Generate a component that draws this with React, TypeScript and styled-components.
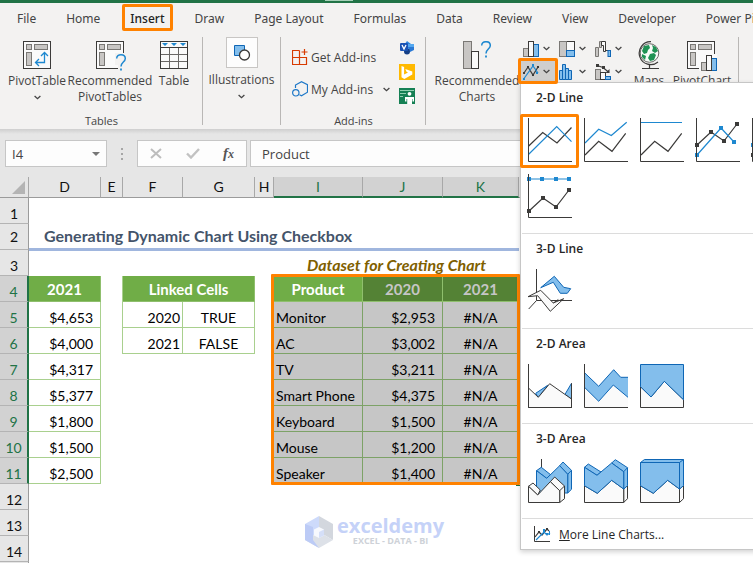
import React from "react";
import styled, { createGlobalStyle, css } from "styled-components";

const UI = `"Open Sans", "Noto Sans", sans-serif`;
const TAB_FONT = `"Noto Sans", "Open Sans", sans-serif`;
const SHEET = `Lato, "Liberation Sans", sans-serif`;
const ORANGE = "#ff8200";
const INK = "#3b3a39";
const BLUE = "#1e88d0";
const EDGE = "#0f66b5";
const FILL = "#83beec";
const PALE = "#fafafa";
const GREY = "#c8c6c4";

const GlobalStyle = createGlobalStyle`
  * { box-sizing: border-box; }
  html, body { margin: 0; height: 100%; overflow: hidden; }
  body { font-family: ${UI}; font-size: 12px; color: #444; background: #fff; }
  button, input { font: inherit; color: inherit; margin: 0; padding: 0; border: 0; background: none; }
  svg { display: block; flex: none; }
`;

const Page = styled.div`
  height: 100vh;
  overflow: hidden;
  display: flex;
  flex-direction: column;
`;

const TitleStrip = styled.div`
  flex: none;
  height: 3px;
  background: #217346;
  padding-left: 325px;
`;
const TitleMark = styled.div`
  width: 28px;
  height: 1px;
  background: #a5cfb7;
`;

const TabBar = styled.nav`
  flex: none;
  display: flex;
  gap: 30px;
  height: 34px;
  padding: 0 17px 4px;
  background: #f3f2f1;
  overflow: hidden;
`;
const Tab = styled.button<{ $active?: boolean }>`
  position: relative;
  flex: none;
  white-space: nowrap;
  font-family: ${TAB_FONT};
  font-size: 12px;
  ${(p) =>
    p.$active &&
    css`
      font-weight: 500;
      color: #222;
      &::after {
        content: "";
        position: absolute;
        inset: 1px -8px 2px -8px;
        border: 3px solid ${ORANGE};
        border-radius: 2px;
      }
    `}
`;

const Ribbon = styled.div`
  flex: none;
  display: flex;
  height: 92px;
  background: #f3f2f1;
`;
const Group = styled.section<{ $width: number }>`
  flex: none;
  position: relative;
  display: flex;
  flex-direction: column;
  justify-content: space-between;
  width: ${(p) => p.$width}px;
  &::after {
    content: "";
    position: absolute;
    right: 0;
    top: 0;
    bottom: 4px;
    width: 1px;
    background: #b9b7b5;
  }
`;
const GroupBody = styled.div<{ $left?: number }>`
  display: flex;
  align-items: flex-start;
  padding-left: ${(p) => p.$left ?? 0}px;
`;
const GroupName = styled.div`
  text-align: center;
  font-size: 11px;
  line-height: 16px;
`;
const BigButton = styled.button<{ $width: number; $top?: number }>`
  flex: none;
  display: flex;
  flex-direction: column;
  align-items: center;
  gap: 4px;
  width: ${(p) => p.$width}px;
  padding-top: ${(p) => p.$top ?? 4}px;
  line-height: 16px;
  white-space: nowrap;
`;
const BigLabel = styled.span`
  display: flex;
  flex-direction: column;
  align-items: center;
`;
const ChevronLine = styled.span`
  display: flex;
  align-items: center;
  height: 16px;
`;
const IconTile = styled.span`
  display: flex;
  align-items: center;
  justify-content: center;
  width: 32px;
  height: 31px;
  background: #fdfdfd;
  border: 1px solid #c8c6c4;
`;
const AddInList = styled.div`
  display: flex;
  flex-direction: column;
  gap: 8px;
  width: 98px;
  padding-top: 8px;
`;
const AddInButton = styled.button`
  display: flex;
  align-items: center;
  gap: 3px;
  height: 24px;
  white-space: nowrap;
  svg:last-child:not(:first-child) { margin-left: auto; }
`;
const AppColumn = styled.div`
  display: flex;
  flex-direction: column;
  gap: 8px;
  margin-left: 9px;
  padding-top: 3px;
`;
const AppButton = styled.button`
  display: block;
  width: 16px;
  height: 16px;
`;

const ChartGrid = styled.div`
  display: grid;
  grid-template-columns: repeat(3, 36px);
  grid-auto-rows: 23px;
  width: 108px;
`;
const SplitWrap = styled.div`
  position: relative;
`;
const Split = styled.button<{ $open?: boolean }>`
  display: flex;
  align-items: center;
  gap: 4px;
  width: 36px;
  height: 23px;
  padding-left: 3px;
  background: ${(p) => (p.$open ? "#cfcecd" : "transparent")};
`;
const SplitFrame = styled.span`
  position: absolute;
  z-index: 5;
  inset: -2px -2px -1px -2px;
  border: 3px solid ${ORANGE};
  border-radius: 2px;
  pointer-events: none;
`;

const Menu = styled.div`
  position: absolute;
  z-index: 4;
  left: 0;
  top: 22px;
  width: 296px;
  color: #262626;
  background: #fff;
  border: 1px solid #c6c6c6;
  box-shadow: 0 2px 5px rgba(0, 0, 0, 0.18);
`;
const MenuSection = styled.section`
  margin-left: 1px;
  padding-bottom: 9px;
  border-bottom: 1px solid #dcdcdc;
`;
const MenuTitle = styled.h2`
  margin: 0;
  padding-left: 14px;
  font-size: 12px;
  font-weight: 600;
  line-height: 29px;
`;
const Gallery = styled.div`
  display: grid;
  grid-template-columns: repeat(5, 56px);
`;
const GalleryItem = styled.button<{ $marked?: boolean }>`
  position: relative;
  width: 56px;
  height: 56px;
  padding: 6px;
  ${(p) =>
    p.$marked &&
    css`
      &::after {
        content: "";
        position: absolute;
        inset: 2px -1px 0 -2px;
        border: 3px solid ${ORANGE};
        border-radius: 2px;
      }
    `}
`;
const MoreButton = styled.button`
  display: flex;
  align-items: center;
  gap: 8px;
  width: 100%;
  height: 30px;
  padding-left: 13px;
`;

const FormulaRow = styled.div`
  flex: none;
  display: flex;
  height: 48px;
  padding: 11px 0 10px 5px;
  background: linear-gradient(#cfcfcf, #e6e6e6 5px);
`;
const NameBox = styled.div`
  display: flex;
  align-items: center;
  width: 102px;
  background: #fdfdfd;
  border: 1px solid #c6c6c6;
  input {
    flex: 1;
    min-width: 0;
    padding-left: 6px;
    font-size: 13px;
  }
  button { padding: 8px 6px; }
`;
const Dots = styled.div`
  display: flex;
  flex-direction: column;
  align-items: center;
  justify-content: center;
  gap: 3px;
  width: 30px;
  i { width: 2px; height: 2px; background: #a6a6a6; }
`;
const FxBox = styled.div`
  display: flex;
  align-items: center;
  justify-content: space-between;
  width: 110px;
  margin-right: 3px;
  padding: 0 12px;
  background: #fdfdfd;
  border: 1px solid #c6c6c6;
`;
const FxButton = styled.button`
  && { font: italic bold 15px/16px "Liberation Serif", serif; }
  color: #555;
  small { font-size: 12px; }
`;
const FormulaInput = styled.input`
  flex: 1;
  min-width: 0;
  && {
    padding-left: 11px;
    font-size: 13px;
    background: #fdfdfd;
    border: 1px solid #c6c6c6;
  }
`;

const SheetArea = styled.main`
  flex: 1;
  min-height: 0;
  position: relative;
  overflow: hidden;
  background: linear-gradient(to right, #e6e6e6 28px, #9b9b9b 28px, #9b9b9b 29px, #fff 29px);
`;
const Sheet = styled.table`
  width: 100%;
  table-layout: fixed;
  border-spacing: 0;
  font-family: ${SHEET};
  font-size: 14px;
  line-height: 18px;
  color: #000;
  th, td { padding: 0; white-space: nowrap; }
`;
const ColHead = styled.th<{ $sel?: boolean }>`
  height: 21px;
  font-weight: 400;
  font-size: 14px;
  color: ${(p) => (p.$sel ? "#217346" : "#111")};
  background: ${(p) => (p.$sel ? "#d2d2d2" : "#e6e6e6")};
  border-right: 1px solid #a8a8a8;
  border-bottom: ${(p) => (p.$sel ? "2px solid #217346" : "1px solid #9b9b9b")};
`;
const Corner = styled(ColHead)`
  svg { margin: 0 3px 0 auto; }
`;
const RowHead = styled.th<{ $sel?: boolean; $mid?: boolean }>`
  height: 26px;
  font-weight: 400;
  font-size: 14px;
  vertical-align: ${(p) => (p.$mid ? "middle" : "bottom")};
  color: ${(p) => (p.$sel ? "#217346" : "#111")};
  background: ${(p) => (p.$sel ? "#d2d2d2" : "#e6e6e6")};
  border-right: ${(p) => (p.$sel ? "2px solid #217346" : "1px solid #9b9b9b")};
  border-bottom: 1px solid #b4b4b4;
`;
const Cell = styled.td<{
  $align?: "left" | "center" | "right";
  $kind?: "grid" | "sel" | "head" | "active" | "selHead";
  $pad?: number;
}>`
  position: relative;
  height: 26px;
  vertical-align: bottom;
  text-align: ${(p) => p.$align ?? "left"};
  && { padding: 0 ${(p) => p.$pad ?? 2}px; }
  ${(p) =>
    p.$kind === "grid" &&
    css`
      border-right: 1px solid #a9d08e;
      border-bottom: 1px solid #a9d08e;
    `}
  ${(p) =>
    p.$kind === "sel" &&
    css`
      background: #c6c6c6;
      border-right: 1px solid #7da267;
      border-bottom: 1px solid #7da267;
    `}
  ${(p) =>
    (p.$kind === "head" || p.$kind === "active" || p.$kind === "selHead") &&
    css`
      vertical-align: middle;
      font-size: 15px;
      font-weight: 700;
      color: ${p.$kind === "selHead" ? "#c6c6c6" : "#fff"};
      background: ${p.$kind === "selHead" ? "#548235" : "#70ad47"};
      border-right: 1px solid #8fbf6d;
      border-bottom: 1px solid #8fbf6d;
    `}
`;
const LeftEdge = styled.td<{ $on?: boolean }>`
  border-right: 1px solid ${(p) => (p.$on ? "#a9d08e" : "transparent")};
`;
const TitleCell = styled.td`
  vertical-align: middle;
  font-size: 16px;
  font-weight: 700;
  color: #44546a;
  border-bottom: 2px solid #a0b6de;
  && { padding-left: 15px; }
`;
const CaptionCell = styled.td`
  vertical-align: bottom;
  text-align: center;
  font-size: 16px;
  font-weight: 700;
  font-style: italic;
  color: #7f6000;
  border-top: 1px solid #a0b6de;
  && { padding-bottom: 2px; }
`;
const UnderTitle = styled.td`
  border-top: 1px solid #a0b6de;
`;
const SelectionFrame = styled.span`
  position: absolute;
  z-index: 1;
  left: -3px;
  top: -2px;
  width: 249px;
  height: 211px;
  border: 3px solid ${ORANGE};
  border-radius: 1px;
  pointer-events: none;
  &::after {
    content: "";
    position: absolute;
    right: -3px;
    bottom: -4px;
    width: 4px;
    height: 1px;
    background: #217346;
  }
`;

const Watermark = styled.div`
  position: absolute;
  left: 305px;
  top: 339px;
  display: flex;
  gap: 4px;
  color: #c5d2f8;
`;
const WatermarkText = styled.div`
  display: flex;
  flex-direction: column;
  align-items: center;
  font-weight: 700;
  font-size: 20px;
  line-height: 20px;
  small {
    font-size: 9px;
    line-height: 10px;
    color: #ced2d8;
  }
`;

const Chevron = () => (
  <svg width="7" height="5" viewBox="0 0 7 5" fill="none" stroke="#444" strokeWidth="1.3">
    <path d="M.6 1 3.5 3.7 6.4 1" />
  </svg>
);

const PivotFrame = () => (
  <>
    <rect x=".5" y=".5" width="27" height="27" fill={PALE} stroke={INK} />
    <g fill={GREY} stroke="#7a7875">
      <rect x="3.5" y="3.5" width="5" height="5" />
      <rect x="11.5" y="3.5" width="13" height="5" />
      <rect x="3.5" y="11.5" width="5" height="13" />
    </g>
  </>
);
const Question = ({ x, y }: { x: number; y: number }) => (
  <g transform={`translate(${x} ${y})`} fill="none" stroke={BLUE} strokeWidth="1.5">
    <path d="M.7 4.5C.7 2 2.6.7 5 .7s4.3 1.5 4.3 3.8C9.3 8 5 8.2 5 12.5" />
    <path d="M5 14.5v2" strokeWidth="1.8" />
  </g>
);
const PivotTableIcon = () => (
  <svg width="28" height="28" viewBox="0 0 28 28">
    <PivotFrame />
    <g fill="none" stroke={BLUE} strokeWidth="1.3">
      <path d="M21.5 12v9.5H13M18 15l3.5-3.5L25 15M16 18l-3.5 3.5L16 25" />
    </g>
  </svg>
);
const RecommendedPivotIcon = () => (
  <svg width="28" height="28" viewBox="0 0 28 28" overflow="visible">
    <PivotFrame />
    <path d="M19 12h12v18h-9v-6h-3z" fill="#f3f2f1" />
    <Question x={20} y={13} />
  </svg>
);
const TableIcon = () => (
  <svg width="28" height="28" viewBox="0 0 28 28">
    <rect x=".5" y=".5" width="27" height="27" fill={PALE} stroke={INK} />
    <path d="M1 6.5h26" stroke={INK} />
    <path d="M9.5 7v20M18.5 7v20M1 13.5h26M1 20.5h26" stroke="#6a6866" />
    <path d="M2 2h6L5 5zM11 2h6l-3 3zM20 2h6l-3 3z" fill={BLUE} />
  </svg>
);
const ShapesIcon = () => (
  <svg width="18" height="18" viewBox="0 0 18 18">
    <path d="M1.5 1.5h10v10h-10z" fill={FILL} stroke={EDGE} />
    <circle cx="11.5" cy="11" r="5" fill="#fff" stroke={INK} strokeWidth="1.3" />
  </svg>
);
const GetAddInsIcon = () => (
  <svg width="16" height="16" viewBox="0 0 16 16" fill="none" stroke="#d83b01" strokeWidth="1.2">
    <path d="M7.5 1.5h-7v14h14v-7H.5M7.5 1.5v14M12.5 0v6M9.5 3h6" />
  </svg>
);
const MyAddInsIcon = () => (
  <svg width="16" height="16" viewBox="0 0 16 16" fill="none" stroke="#1e78c8" strokeWidth="1.2">
    <path d="M3.5 7V4L9.5.7l6 3v7.5l-6 3.5-2-1" />
    <circle cx="3.8" cy="11.8" r="3.2" />
  </svg>
);
const VisioIcon = () => (
  <svg width="16" height="16" viewBox="0 0 16 16">
    <path d="M8 1l4 3-4 4-3-3z" fill="#2f86e0" />
    <path d="M9 4h6v6H9z" fill="#54a8f0" />
    <path d="M9 7h6v3l-4 2z" fill="#2a78d4" />
    <circle cx="8" cy="11.5" r="3" fill="#143f86" />
    <rect x="1" y="3" width="8" height="8" rx="1" fill="#1a53b4" />
    <path d="M3 5l2 4 2-4" fill="none" stroke="#fff" strokeWidth="1.3" />
  </svg>
);
const BingIcon = () => (
  <svg width="16" height="16" viewBox="0 0 16 16">
    <path d="M0 0h16v16H0z" fill="#ffb900" />
    <path d="M2.5 2l2.6 1v7.5L9 8.4 7.5 7.7 6.3 5l7 2.5v3L5.3 15l-2.8-1.8z" fill="#fff" />
  </svg>
);
const PeopleGraphIcon = () => (
  <svg width="16" height="16" viewBox="0 0 16 16">
    <path d="M0 0h16v16H0z" fill="#158054" />
    <path d="M1 2.5h14M1 5.5h6M1 8.5h3" stroke="#8fd0b0" />
    <circle cx="10.5" cy="5.8" r="1.9" fill="#fff" />
    <path d="M6 9h9v4.5h-1.5V11H13v5H8.2v-5h-.7v2.5H6z" fill="#fff" />
  </svg>
);
const RecommendedChartsIcon = () => (
  <svg width="28" height="28" viewBox="0 0 28 28">
    <rect x=".5" y=".5" width="8" height="27" fill={GREY} stroke="#7a7875" />
    <rect x="8.5" y="10.5" width="7" height="17" fill={PALE} stroke={INK} />
    <Question x={18} y={0} />
  </svg>
);
const ColumnIcon = () => (
  <svg width="16" height="16" viewBox="0 0 16 16">
    <rect x=".5" y="7.5" width="5" height="8" fill={GREY} stroke="#7a7875" />
    <rect x="10.5" y="3.5" width="5" height="12" fill={FILL} stroke={EDGE} />
    <rect x="5.5" y=".5" width="5" height="15" fill={PALE} stroke={INK} />
  </svg>
);
const TreemapIcon = () => (
  <svg width="16" height="16" viewBox="0 0 16 16">
    <rect x="7.5" y=".5" width="8" height="9" fill={PALE} stroke={INK} />
    <rect x=".5" y=".5" width="7" height="15" fill={GREY} stroke="#7a7875" />
    <rect x="7.5" y="9.5" width="8" height="6" fill={FILL} stroke={EDGE} />
  </svg>
);
const WaterfallIcon = () => (
  <svg width="16" height="16" viewBox="0 0 16 16">
    <path d="M.5 15.5v-9h3v9z" fill={GREY} stroke="#7a7875" />
    <path d="M4.5 6.5v-6h2v6z" fill={GREY} stroke="#7a7875" />
    <path d="M6.5.5h4v10h-2v-6h-2z" fill={PALE} stroke={INK} />
    <path d="M10.5 9.5h3" stroke={INK} />
    <rect x="13" y="9.5" width="2.5" height="6" fill={FILL} stroke={EDGE} />
  </svg>
);
const LineIcon = () => (
  <svg width="16" height="16" viewBox="0 0 16 16" fill="none">
    <path d="M1 9l4-6 5 8 5-8" stroke={INK} strokeWidth="1.2" />
    <path d="M1 14.5L10 2l5 7" stroke={BLUE} strokeWidth="1.2" />
    <path d="M0 8h2v2H0zM4 2h2v2H4zM9 10h2v2H9zM14 2h2v2h-2z" fill={INK} />
    <path d="M0 14h2v2H0zM9 0h2v2H9zM13 8h2v2h-2z" fill={BLUE} />
  </svg>
);
const HistogramIcon = () => (
  <svg width="16" height="16" viewBox="0 0 16 16" fill={FILL} stroke={EDGE}>
    <path d="M.5 15.5v-9h3v9zM3.5 15.5V.5h3v15zM6.5 15.5v-11h3v11zM9.5 15.5v-9h3v9z" />
  </svg>
);
const ComboIcon = () => (
  <svg width="16" height="16" viewBox="0 0 16 16">
    <rect x=".5" y="5.5" width="5" height="10" fill={GREY} stroke="#7a7875" />
    <rect x="5.5" y="8.5" width="5" height="7" fill={PALE} stroke={INK} />
    <rect x="10.5" y="12.5" width="5" height="3" fill={FILL} stroke={EDGE} />
    <path d="M2 1.5l6 2 6 5" fill="none" stroke={INK} strokeWidth="1.2" />
    <path d="M1 0h3v3H1zM7 2h3v3H7zM14.5 5v4h-4z" fill={INK} />
  </svg>
);
const MapsIcon = () => (
  <svg width="24" height="28" viewBox="0 0 24 28">
    <circle cx="12.5" cy="12" r="9.3" fill="#f7fbf8" stroke="#6a6866" />
    <path d="M7 5l5-1 1 3-2 2-1 3-3 1-2-3zM15 4l4 2 2 4-3 2-3-2 1-3zM5 13l4 2-1 4-3-3zM13 13l4-1 2 2-2 5-4 1-2-3z" fill="#1f9254" />
    <path d="M14 .6A11.5 11.5 0 1 0 21 21M12.5 23v4M5 27.5h17" fill="none" stroke={INK} strokeWidth="1.2" />
  </svg>
);
const PivotChartIcon = () => (
  <svg width="30" height="28" viewBox="0 0 30 28" overflow="visible">
    <PivotFrame />
    <path d="M12 13h18v17H12z" fill={PALE} />
    <path d="M27.5 13V.5" stroke={INK} />
    <rect x="14.5" y="21.5" width="5" height="8" fill={GREY} stroke="#7a7875" />
    <rect x="24.5" y="17.5" width="5" height="12" fill={FILL} stroke={EDGE} />
    <rect x="19.5" y="14.5" width="5" height="15" fill={PALE} stroke={INK} />
  </svg>
);

type Point = [number, number];
const asPoints = (pts: Point[]) => pts.map((p) => p.join(",")).join(" ");
const Trace = ({ pts, color, marks }: { pts: Point[]; color: string; marks?: boolean }) => (
  <g>
    <polyline points={asPoints(pts)} fill="none" stroke={color} strokeWidth="1.2" />
    {marks && pts.map(([x, y]) => <rect key={x} x={x - 2} y={y - 2} width="4" height="4" fill={color} />)}
  </g>
);
const Area = ({ pts, tone }: { pts: Point[]; tone: "blue" | "white" }) => (
  <polygon
    points={asPoints(pts)}
    fill={tone === "blue" ? FILL : PALE}
    stroke={tone === "blue" ? EDGE : INK}
    strokeLinejoin="round"
  />
);
const Art = ({ axes, children }: { axes?: boolean; children: React.ReactNode }) => (
  <svg width="44" height="44" viewBox="0 0 44 44" overflow="visible">
    {children}
    {axes && <path d="M.5 0v43.5H44" fill="none" stroke={INK} />}
  </svg>
);

const lower: Point[] = [[1, 37], [14.7, 23.3], [28, 33.3], [41.7, 15.3]];

const sections = [
  {
    title: "2-D Line",
    items: [
      {
        name: "Line",
        art: (
          <Art axes>
            <Trace color={INK} pts={[[0.7, 28], [14.7, 14.5], [29, 25], [43.5, 9.5]]} />
            <Trace color={BLUE} pts={[[0.7, 36.3], [28.7, 8.5], [43.5, 23.7]]} />
          </Art>
        ),
      },
      {
        name: "Stacked Line",
        art: (
          <Art axes>
            <Trace color={INK} pts={lower} />
            <Trace color={BLUE} pts={[[1, 25], [14.7, 11.3], [27.3, 17.5], [42.7, 4.3]]} />
          </Art>
        ),
      },
      {
        name: "100% Stacked Line",
        art: (
          <Art axes>
            <Trace color={INK} pts={lower} />
            <Trace color={BLUE} pts={[[1, 4.5], [42, 4.5]]} />
          </Art>
        ),
      },
      {
        name: "Line with Markers",
        art: (
          <Art axes>
            <Trace marks color={INK} pts={[[1, 27], [15, 14], [28, 23], [41, 6]]} />
            <Trace marks color={BLUE} pts={[[1, 37], [25, 10], [38, 24]]} />
          </Art>
        ),
      },
      {
        name: "Stacked Line with Markers",
        art: (
          <Art axes>
            <Trace marks color={INK} pts={[[1, 37], [15, 24], [28, 33], [41, 16]]} />
            <Trace marks color={BLUE} pts={[[1, 27], [15, 12], [28, 18], [41, 5]]} />
          </Art>
        ),
      },
      {
        name: "100% Stacked Line with Markers",
        art: (
          <Art axes>
            <Trace marks color={INK} pts={[[1, 37], [15, 24], [28, 33], [41, 16]]} />
            <Trace marks color={BLUE} pts={[[1, 5], [14, 5], [28, 5], [41, 5]]} />
          </Art>
        ),
      },
    ],
  },
  {
    title: "3-D Line",
    items: [
      {
        name: "3-D Line",
        art: (
          <Art>
            <path d="M8.5 0v31.5H44M8.5 31.5L.7 40" fill="none" stroke={INK} />
            <Area tone="blue" pts={[[12.7, 18.7], [26.3, 7.3], [35.7, 18.3], [42.7, 19.7], [39.3, 24.3], [32.3, 24.3], [25.3, 13.3]]} />
            <Area tone="white" pts={[[0, 27.7], [12.7, 21.3], [25.3, 34], [35.7, 29.7], [22.3, 42.3], [9.7, 26.7]]} />
            <path d="M25.3 34l5-3.5M26 31.5h10" stroke={INK} fill="none" />
          </Art>
        ),
      },
    ],
  },
  {
    title: "2-D Area",
    items: [
      {
        name: "Area",
        art: (
          <Art axes>
            <Area tone="blue" pts={[[7.7, 29.3], [19.7, 21.3], [10.3, 33.3]]} />
            <Area tone="blue" pts={[[43.5, 19.3], [37, 30.3], [43.5, 35]]} />
            <Area tone="white" pts={[[0.5, 24], [10.3, 33.3], [21.7, 19.7], [43.5, 35], [43.5, 43.5], [0.5, 43.5]]} />
            <path d="M43.5 19.3V35" stroke={INK} />
          </Art>
        ),
      },
      {
        name: "Stacked Area",
        art: (
          <Art axes>
            <path d="M.5 23.3l14.2 14L29.3 21 44 33.3V43H.5z" fill={PALE} />
            <path d="M.5 8.7l14.2 13.6L29.7 5.7l7 7.6H44v20L29.3 21 14.7 37.3.5 23.3z" fill={FILL} />
            <path d="M.5 8.7l14.2 13.6L29.7 5.7l7 7.6H44M44 33.3L29.3 21 14.7 37.3.5 23.3" fill="none" stroke={EDGE} />
          </Art>
        ),
      },
      {
        name: "100% Stacked Area",
        art: (
          <Art>
            <Area tone="white" pts={[[0.5, 22.7], [11, 33], [24.3, 17.3], [43.5, 35.7], [43.5, 43.5], [0.5, 43.5]]} />
            <Area tone="blue" pts={[[0.5, 0.5], [43.5, 0.5], [43.5, 35.7], [24.3, 17.3], [11, 33], [0.5, 22.7]]} />
          </Art>
        ),
      },
    ],
  },
  {
    title: "3-D Area",
    items: [
      {
        name: "3-D Area",
        art: (
          <Art>
            <path d="M13.5 0v10" stroke={INK} />
            <Area tone="blue" pts={[[8.5, 11.7], [13.3, 8.3], [23, 16], [18.7, 19.3]]} />
            <Area tone="blue" pts={[[31.7, 6.7], [35, 3], [43.5, 11.3], [43.5, 30.3], [39.7, 34], [39.7, 15.3]]} />
            <Area tone="blue" pts={[[8.5, 11.7], [18.7, 19.3], [31.7, 6.7], [39.7, 15.3], [39.7, 34], [8.5, 34]]} />
            <path d="M39.7 15.3l3.8-4" stroke={EDGE} />
            <Area tone="white" pts={[[0.5, 27.3], [5, 24], [12.3, 31], [9.7, 36]]} />
            <Area tone="white" pts={[[22.3, 22.7], [26.7, 18], [36.5, 27], [36.5, 39.7], [31.7, 43.5], [31.7, 31.7]]} />
            <Area tone="white" pts={[[0.5, 27.3], [9.7, 36], [22.3, 22.7], [31.7, 31.7], [31.7, 43.5], [0.5, 43.5]]} />
            <path d="M31.7 31.7l4.8-4.7" stroke={INK} />
          </Art>
        ),
      },
      {
        name: "3-D Stacked Area",
        art: (
          <Art>
            <Area tone="white" pts={[[39.7, 30], [43.5, 26.7], [43.5, 39.7], [39.7, 43.5]]} />
            <Area tone="white" pts={[[0.5, 26.7], [13.3, 34.3], [27.7, 21.3], [39.7, 30], [39.7, 43.5], [0.5, 43.5]]} />
            <Area tone="blue" pts={[[0.5, 8.3], [4.3, 5], [17, 13], [13, 16.3]]} />
            <Area tone="blue" pts={[[27.7, 4], [31.3, 0.7], [43.5, 8.7], [43.5, 26.7], [39.7, 30], [39.7, 12.7]]} />
            <Area tone="blue" pts={[[0.5, 8.3], [13, 16.3], [27.7, 4], [39.7, 12.7], [39.7, 30], [27.7, 21.3], [13.3, 34.3], [0.5, 26.7]]} />
            <path d="M39.7 12.7l3.8-4" stroke={EDGE} />
          </Art>
        ),
      },
      {
        name: "3-D 100% Stacked Area",
        art: (
          <Art>
            <Area tone="white" pts={[[39.5, 30], [43.5, 26.7], [43.5, 39.7], [39.5, 43.5]]} />
            <Area tone="white" pts={[[0.5, 26.7], [13.3, 34.3], [27.7, 21.3], [39.5, 30], [39.5, 43.5], [0.5, 43.5]]} />
            <Area tone="blue" pts={[[0.5, 3.5], [4.5, 0.5], [43.5, 0.5], [43.5, 26.7], [39.5, 30], [39.5, 3.5]]} />
            <Area tone="blue" pts={[[0.5, 3.5], [39.5, 3.5], [39.5, 30], [27.7, 21.3], [13.3, 34.3], [0.5, 26.7]]} />
            <path d="M39.5 3.5l4-3" stroke={EDGE} />
          </Art>
        ),
      },
    ],
  },
];

const MoreIcon = () => (
  <svg width="17" height="17" viewBox="0 0 17 17" fill="none">
    <path d="M1 11l4-5 3 3 5-6 2 2" stroke={INK} strokeWidth="1.2" />
    <path d="M2 14l8-8 3 3 3-2" stroke={BLUE} strokeWidth="1.2" />
    <path d="M4 5h2v2H4zM12 2h2v2h-2z" fill={INK} />
    <path d="M9 3h2v3H9zM12 7h2v2h-2zM15 5h1v4h-1z" fill={BLUE} />
    <path d="M.5 0v15.5H16" stroke={INK} />
  </svg>
);

const LineChartMenu = () => (
  <Menu role="menu" aria-label="Insert line or area chart">
    {sections.map((section) => (
      <MenuSection key={section.title}>
        <MenuTitle>{section.title}</MenuTitle>
        <Gallery>
          {section.items.map((item) => (
            <GalleryItem key={item.name} role="menuitem" aria-label={item.name} $marked={item.name === "Line"}>
              {item.art}
            </GalleryItem>
          ))}
        </Gallery>
      </MenuSection>
    ))}
    <MoreButton role="menuitem">
      <MoreIcon />
      <span>
        <u>M</u>ore Line Charts...
      </span>
    </MoreButton>
  </Menu>
);

const chartButtons = [
  { name: "Column chart", Icon: ColumnIcon },
  { name: "Hierarchy chart", Icon: TreemapIcon },
  { name: "Waterfall chart", Icon: WaterfallIcon },
  { name: "Line chart", Icon: LineIcon, open: true },
  { name: "Statistic chart", Icon: HistogramIcon },
  { name: "Combo chart", Icon: ComboIcon },
];

const tabs = ["File", "Home", "Insert", "Draw", "Page Layout", "Formulas", "Data", "Review", "View", "Developer", "Power Pivot"];

const columns = [
  { id: "D", width: 72 },
  { id: "E", width: 22 },
  { id: "F", width: 60 },
  { id: "G", width: 72 },
  { id: "H", width: 19 },
  { id: "I", width: 89, sel: true },
  { id: "J", width: 80, sel: true },
  { id: "K", width: 76, sel: true },
];

const rows = [
  { total: "$4,653", year: "2020", linked: "TRUE", product: "Monitor", first: "$2,953" },
  { total: "$4,000", year: "2021", linked: "FALSE", product: "AC", first: "$3,002" },
  { total: "$4,317", product: "TV", first: "$3,211" },
  { total: "$5,377", product: "Smart Phone", first: "$4,375" },
  { total: "$1,800", product: "Keyboard", first: "$1,500" },
  { total: "$1,500", product: "Mouse", first: "$1,200" },
  { total: "$2,500", product: "Speaker", first: "$1,400" },
];

const Worksheet = () => (
  <Sheet>
    <colgroup>
      <col width={29} />
      {columns.map((c) => (
        <col key={c.id} width={c.width} />
      ))}
      <col />
    </colgroup>
    <thead>
      <tr>
        <Corner aria-label="Select all">
          <svg width="13" height="13" viewBox="0 0 13 13">
            <path d="M13 0v13H0z" fill="#b4b4b4" />
          </svg>
        </Corner>
        {columns.map((c) => (
          <ColHead key={c.id} $sel={c.sel}>
            {c.id}
          </ColHead>
        ))}
        <ColHead />
      </tr>
    </thead>
    <tbody>
      <tr>
        <RowHead>1</RowHead>
        <td colSpan={9} />
      </tr>
      <tr>
        <RowHead $mid>2</RowHead>
        <TitleCell colSpan={8}>Generating Dynamic Chart Using Checkbox</TitleCell>
        <td />
      </tr>
      <tr>
        <RowHead>3</RowHead>
        <UnderTitle colSpan={5} />
        <CaptionCell colSpan={3}>Dataset for Creating Chart</CaptionCell>
        <td />
      </tr>
      <tr>
        <RowHead $sel>4</RowHead>
        <Cell $kind="head" $align="center">2021</Cell>
        <LeftEdge $on />
        <Cell $kind="head" $align="center" colSpan={2}>Linked Cells</Cell>
        <td />
        <Cell $kind="active" $align="center">
          Product
          <SelectionFrame />
        </Cell>
        <Cell $kind="selHead" $align="center">2020</Cell>
        <Cell $kind="selHead" $align="center">2021</Cell>
        <td />
      </tr>
      {rows.map((r, i) => (
        <tr key={r.product}>
          <RowHead $sel>{i + 5}</RowHead>
          <Cell $kind="grid" $align="right" $pad={7}>{r.total}</Cell>
          <LeftEdge $on={!!r.year} />
          <Cell $kind={r.year ? "grid" : undefined} $align="right">{r.year}</Cell>
          <Cell $kind={r.year ? "grid" : undefined} $align="center">{r.linked}</Cell>
          <td />
          <Cell $kind="sel">{r.product}</Cell>
          <Cell $kind="sel" $align="right" $pad={7}>{r.first}</Cell>
          <Cell $kind="sel" $align="center">#N/A</Cell>
          <td />
        </tr>
      ))}
      {[12, 13, 14].map((n) => (
        <tr key={n}>
          <RowHead>{n}</RowHead>
          <td colSpan={9} />
        </tr>
      ))}
    </tbody>
  </Sheet>
);

export default function App() {
  return (
    <Page>
      <GlobalStyle />
      <TitleStrip>
        <TitleMark />
      </TitleStrip>
      <TabBar>
        {tabs.map((t) => (
          <Tab key={t} $active={t === "Insert"}>
            {t}
          </Tab>
        ))}
      </TabBar>
      <Ribbon>
        <Group $width={203}>
          <GroupBody $left={6}>
            <BigButton $width={62}>
              <PivotTableIcon />
              <BigLabel>
                PivotTable
                <ChevronLine>
                  <Chevron />
                </ChevronLine>
              </BigLabel>
            </BigButton>
            <BigButton $width={84}>
              <RecommendedPivotIcon />
              <BigLabel>
                <span>Recommended</span>
                <span>PivotTables</span>
              </BigLabel>
            </BigButton>
            <BigButton $width={44}>
              <TableIcon />
              <BigLabel>Table</BigLabel>
            </BigButton>
          </GroupBody>
          <GroupName>Tables</GroupName>
        </Group>
        <Group $width={78}>
          <BigButton $width={77} $top={0}>
            <IconTile>
              <ShapesIcon />
            </IconTile>
            <BigLabel>
              Illustrations
              <ChevronLine>
                <Chevron />
              </ChevronLine>
            </BigLabel>
          </BigButton>
        </Group>
        <Group $width={145}>
          <GroupBody $left={11}>
            <AddInList>
              <AddInButton>
                <GetAddInsIcon />
                <span>Get Add-ins</span>
              </AddInButton>
              <AddInButton>
                <MyAddInsIcon />
                <span>My Add-ins</span>
                <Chevron />
              </AddInButton>
            </AddInList>
            <AppColumn>
              <AppButton aria-label="Visio Data Visualizer">
                <VisioIcon />
              </AppButton>
              <AppButton aria-label="Bing Maps">
                <BingIcon />
              </AppButton>
              <AppButton aria-label="People Graph">
                <PeopleGraphIcon />
              </AppButton>
            </AppColumn>
          </GroupBody>
          <GroupName>Add-ins</GroupName>
        </Group>
        <Group $width={313}>
          <GroupBody $left={8}>
            <BigButton $width={86}>
              <RecommendedChartsIcon />
              <BigLabel>
                <span>Recommended</span>
                <span>Charts</span>
              </BigLabel>
            </BigButton>
            <ChartGrid>
              {chartButtons.map(({ name, Icon, open }) => (
                <SplitWrap key={name}>
                  <Split aria-label={name} $open={open}>
                    <Icon />
                    <Chevron />
                  </Split>
                  {open && <SplitFrame />}
                  {open && <LineChartMenu />}
                </SplitWrap>
              ))}
            </ChartGrid>
            <BigButton $width={42}>
              <MapsIcon />
              <BigLabel>Maps</BigLabel>
            </BigButton>
            <BigButton $width={64}>
              <PivotChartIcon />
              <BigLabel>PivotChart</BigLabel>
            </BigButton>
          </GroupBody>
        </Group>
      </Ribbon>
      <FormulaRow>
        <NameBox>
          <input aria-label="Name box" defaultValue="I4" />
          <button aria-label="Named ranges">
            <svg width="8" height="4" viewBox="0 0 8 4">
              <path d="M0 0h8L4 4z" fill="#777" />
            </svg>
          </button>
        </NameBox>
        <Dots>
          <i />
          <i />
          <i />
        </Dots>
        <FxBox>
          <button aria-label="Cancel">
            <svg width="12" height="11" viewBox="0 0 12 11" stroke="#bdbdbd" strokeWidth="2">
              <path d="M1 1l10 9M11 1L1 10" />
            </svg>
          </button>
          <button aria-label="Enter">
            <svg width="14" height="11" viewBox="0 0 14 11" fill="none" stroke="#c2c2c2" strokeWidth="2.4">
              <path d="M1 5.5L5 9.5 13 1" />
            </svg>
          </button>
          <FxButton aria-label="Insert function">
            f<small>x</small>
          </FxButton>
        </FxBox>
        <FormulaInput aria-label="Formula bar" defaultValue="Product" />
      </FormulaRow>
      <SheetArea>
        <Worksheet />
        <Watermark>
          <svg width="28" height="32" viewBox="0 0 28 32">
            <path d="M14 0v16L0 24V8z" fill="#cddafb" />
            <path d="M14 0l14 8v16l-14-8z" fill="#d3d7de" />
            <path d="M0 24l14-8 14 8-14 8z" fill="#dde1e8" />
            <path d="M0 8l8 3v13l6 8L0 24z" fill="#bccbf6" />
            <path d="M14 11l5 2.5v6L14 22l-5-2.5v-6z" fill="#f7f9fe" />
            <path d="M14 16l5-2.5v6L14 22z" fill="#d5dff8" />
          </svg>
          <WatermarkText>
            exceldemy
            <small>EXCEL - DATA - BI</small>
          </WatermarkText>
        </Watermark>
      </SheetArea>
    </Page>
  );
}
